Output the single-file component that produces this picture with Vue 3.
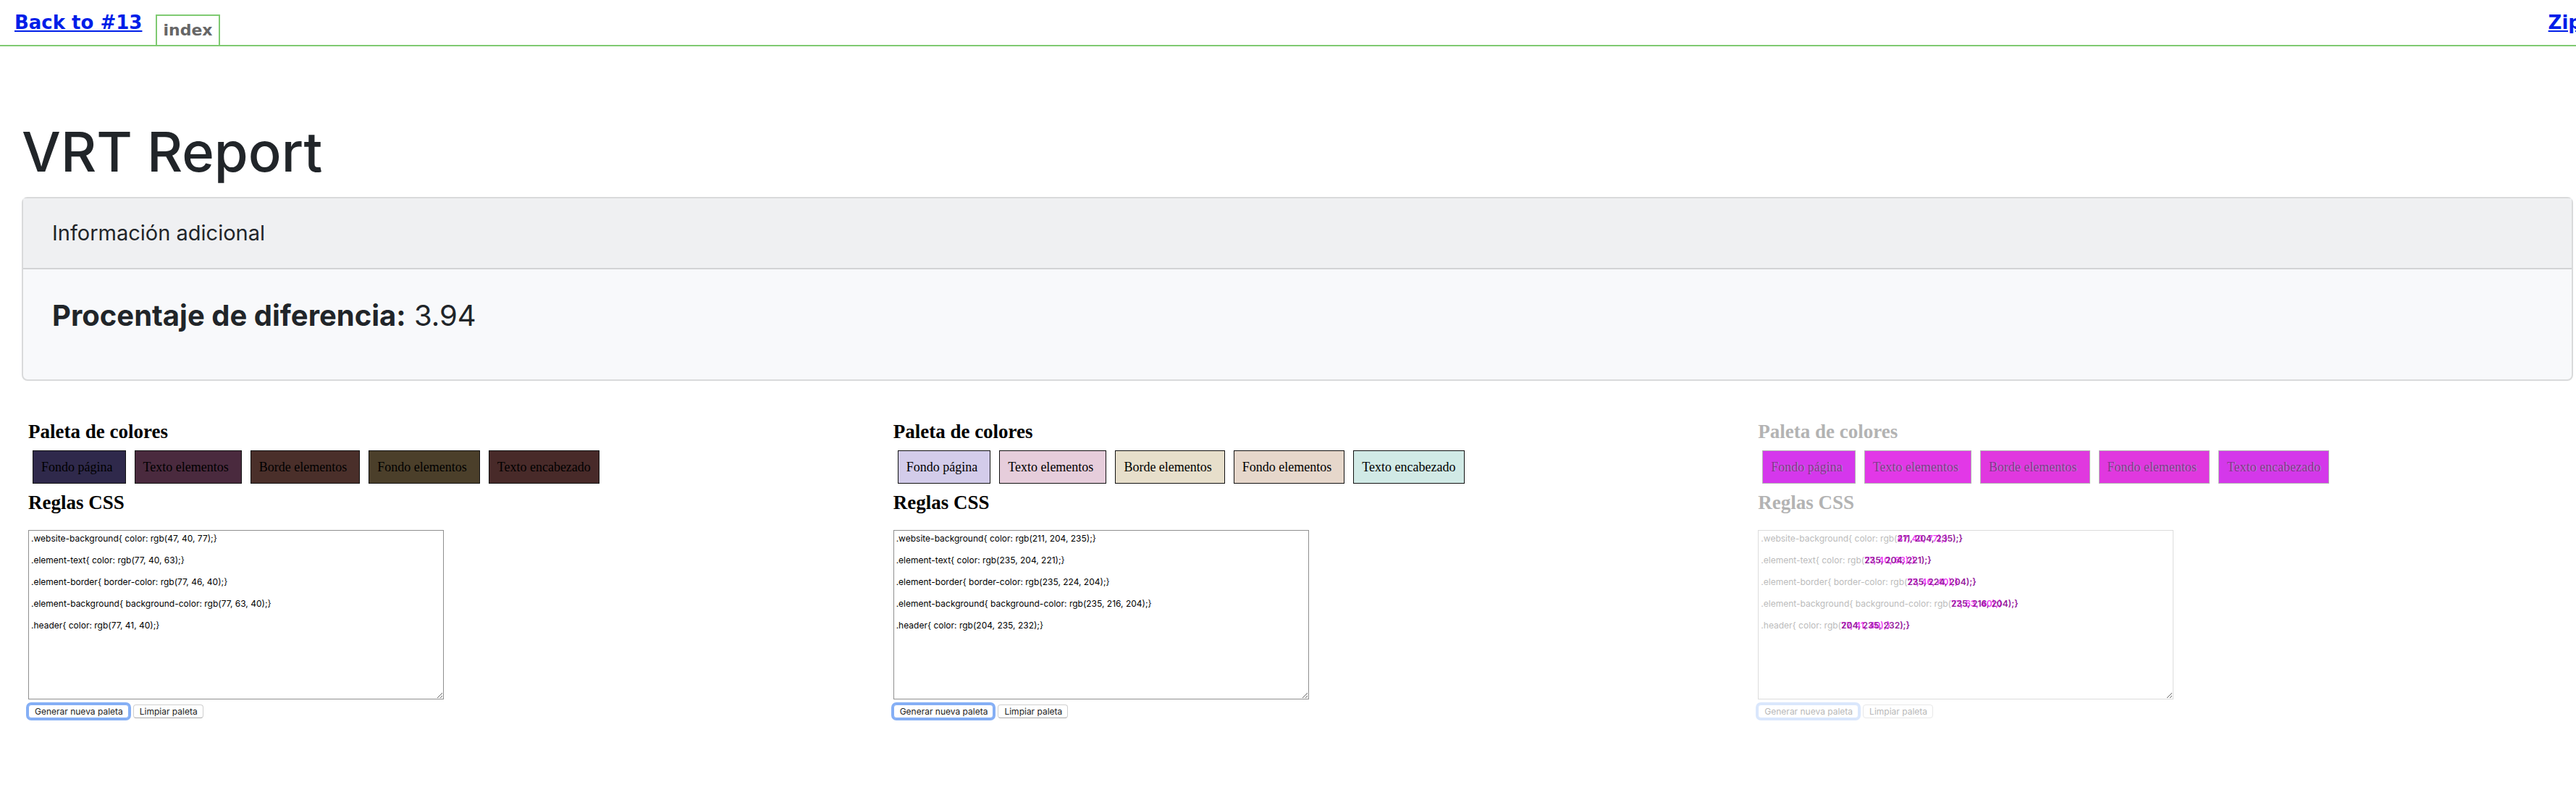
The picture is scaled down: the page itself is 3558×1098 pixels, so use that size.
<script setup>
const names = ['Fondo página', 'Texto elementos', 'Borde elementos', 'Fondo elementos', 'Texto encabezado']
const prefixes = [
  '.website-background{ color: rgb(',
  '.element-text{ color: rgb(',
  '.element-border{ border-color: rgb(',
  '.element-background{ background-color: rgb(',
  '.header{ color: rgb(',
]
const before = ['47, 40, 77', '77, 40, 63', '77, 46, 40', '77, 63, 40', '77, 41, 40']
const after = ['211, 204, 235', '235, 204, 221', '235, 224, 204', '235, 216, 204', '204, 235, 232']
const rules = (values) => prefixes.map((p, i) => p + values[i] + ');}').join('\n\n')

const panels = [
  {
    id: 'before',
    colors: ['#2f294b', '#4a2a3e', '#4a2f2a', '#4b3f2a', '#482a29'],
    text: rules(before),
  },
  {
    id: 'after',
    colors: ['#d3ccea', '#e6cddb', '#e7dfcb', '#e6d7cb', '#d1eae6'],
    text: rules(after),
  },
  {
    id: 'diff',
    diff: true,
    colors: ['#d537ec', '#e238e7', '#e038df', '#e038df', '#d438ea'],
    text: '',
  },
]
</script>

<template>
  <div class="page">
    <nav class="topbar">
      <a class="back" href="#">Back to #13</a>
      <a class="tab" href="#">index</a>
      <a class="zip" href="#">Zip</a>
    </nav>
    <main class="report">
      <h1>VRT Report</h1>
      <section class="card">
        <header class="card-header">Información adicional</header>
        <div class="card-body">
          <p class="metric"><strong>Procentaje de diferencia:</strong> 3.94</p>
        </div>
      </section>
      <div class="row">
        <section v-for="panel in panels" :key="panel.id" class="panel" :class="{ diff: panel.diff }">
          <h2>Paleta de colores</h2>
          <ul class="swatches">
            <li v-for="(name, i) in names" :key="name" :style="{ backgroundColor: panel.colors[i] }">{{ name }}</li>
          </ul>
          <h2><label :for="panel.id">Reglas CSS</label></h2>
          <div class="rules">
            <textarea :id="panel.id" :value="panel.text" spellcheck="false"></textarea>
            <div v-if="panel.diff" class="overlay">
              <div v-for="(prefix, i) in prefixes" :key="prefix" class="line">
                <span>{{ prefix }}</span>
                <span class="values">
                  <span class="old">{{ before[i] }});}</span>
                  <span class="new">{{ after[i] }});}</span>
                </span>
              </div>
            </div>
          </div>
          <div class="actions">
            <button type="button" class="focused">Generar nueva paleta</button>
            <button type="button">Limpiar paleta</button>
          </div>
        </section>
      </div>
    </main>
  </div>
</template>

<style>
body {
  background: #fff;
}
</style>

<style scoped>
.page {
  overflow: hidden;
  padding-bottom: 60px;
  font-family: Inter, "Liberation Sans", sans-serif;
  color: #212529;
}
.topbar {
  display: flex;
  align-items: flex-end;
  box-sizing: border-box;
  height: 64px;
  margin-right: -8px;
  padding-left: 20px;
  border-bottom: 2px solid #7fca72;
  font-family: "DejaVu Sans", Verdana, sans-serif;
  font-weight: bold;
}
.back,
.zip {
  align-self: flex-start;
  margin-top: 15px;
  font-size: 26px;
  line-height: 32px;
  color: #001ee8;
  text-decoration: underline;
  white-space: nowrap;
}
.zip {
  margin-left: auto;
}
.tab {
  box-sizing: border-box;
  height: 42px;
  margin-left: 19px;
  padding: 7px 8px 0;
  border: 2px solid #7fca72;
  border-bottom: 0;
  font-size: 22px;
  line-height: 26px;
  color: #666;
  text-decoration: none;
}
.report {
  margin-right: -26px;
  padding: 97px 30px 0;
}
h1 {
  margin: 0 0 15px;
  font-size: 76px;
  font-weight: 500;
  line-height: 96px;
}
.card {
  border: 2px solid #d9dadb;
  border-radius: 8px;
  background: #f8f9fb;
}
.card-header {
  padding: 24px 40px;
  border-bottom: 2px solid #d2d3d5;
  background: #eff0f2;
  font-size: 29px;
  line-height: 48px;
}
.card-body {
  padding: 40px 40px 64px;
}
.metric {
  margin: 0;
  font-size: 40px;
  line-height: 48px;
}
.row {
  display: grid;
  grid-template-columns: repeat(3, 1fr);
  margin: 54px -30px 0;
}
.panel {
  padding: 0 39px;
  color: #000;
}
h2 {
  margin: 0;
  font-family: "Liberation Serif", serif;
  font-size: 27px;
  font-weight: bold;
  line-height: 32px;
}
.swatches {
  display: flex;
  gap: 12px;
  margin: 10px 0 10px 6px;
  padding: 0;
  list-style: none;
  font-family: "Liberation Serif", serif;
  font-size: 18px;
}
.swatches li {
  padding: 12px 17px 12px 11px;
  border: 1px solid #111;
  line-height: 20px;
  white-space: nowrap;
}
.swatches li:last-child {
  padding-right: 11px;
}
.rules {
  position: relative;
  width: 574px;
  margin-top: 22px;
}
textarea {
  display: block;
  box-sizing: border-box;
  width: 100%;
  height: 234px;
  padding: 3px;
  border: 1px solid #8f8f8f;
  background: #fff;
  color: #000;
  font: 12px/15px Inter, sans-serif;
  outline: 0;
}
.actions {
  display: flex;
  gap: 6px;
  margin-top: 7px;
}
button {
  height: 19px;
  padding: 0 7px 0 8px;
  border: 1px solid #cfcfcf;
  border-bottom-color: #aaa;
  border-radius: 4px;
  background: #fff;
  color: #222;
  font: 12px/16px Inter, sans-serif;
  white-space: nowrap;
}
.focused {
  border-color: #85aff5;
  box-shadow: 0 0 0 3px #85aff5;
}
.diff h2 {
  color: #b3b3b3;
}
.diff li {
  border-color: #b3b3b3;
  color: #8a2a99;
  text-shadow: 1px 0 #b3a0b8;
}
.diff textarea {
  border-color: #dcdcdc;
}
.overlay {
  position: absolute;
  top: 4px;
  left: 4px;
  color: #bbb;
  font-size: 12px;
  line-height: 15px;
}
.line {
  display: flex;
  margin-bottom: 15px;
  white-space: pre;
}
.values {
  display: grid;
  font-weight: 600;
}
.old,
.new {
  grid-area: 1 / 1;
}
.old {
  color: #ee3cf5;
}
.new {
  color: #941a9c;
}
.diff button {
  border-color: #e8e8e8;
  color: #b8b8b8;
}
.diff .focused {
  border-color: #dae7fc;
  box-shadow: 0 0 0 3px #dae7fc;
}
</style>
